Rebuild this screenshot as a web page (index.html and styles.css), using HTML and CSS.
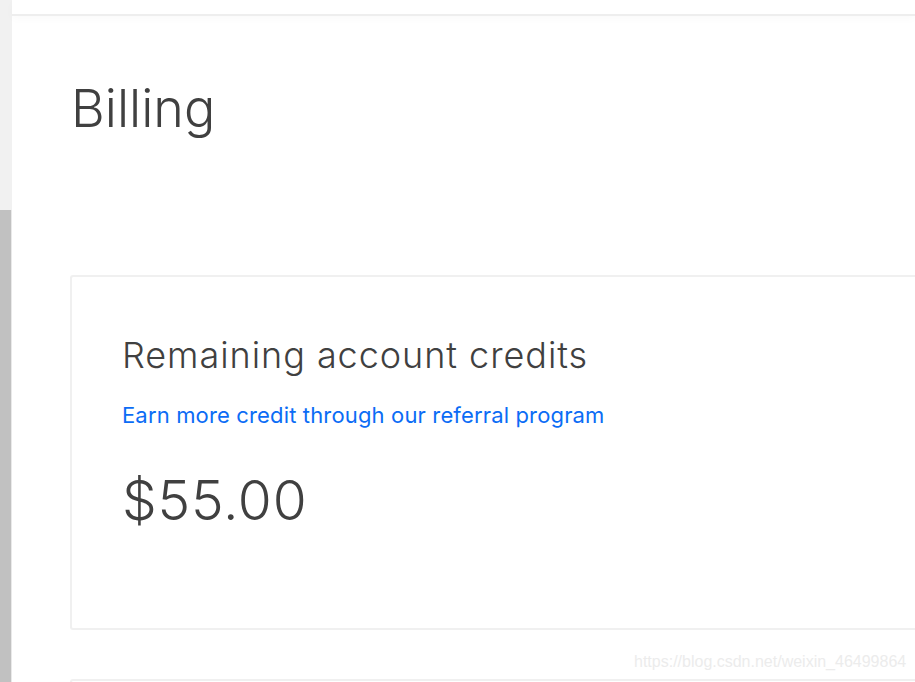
FILE: index.html
```html
<!DOCTYPE html>
<html>
<head>
<meta charset="utf-8">
<link rel="stylesheet" href="styles.css">
</head>
<body>
<div class="rail">
  <div class="rail-top"></div>
  <div class="rail-thumb"></div>
</div>
<div class="main">
  <div class="topbar"></div>
  <div class="content">
    <h1 class="title">Billing</h1>
    <section class="card">
      <h2 class="card-title">Remaining account credits</h2>
      <a class="card-link" href="#">Earn more credit through our referral program</a>
      <div class="amount">$55.00</div>
    </section>
    <section class="card card-next"></section>
  </div>
</div>
<div class="watermark">https://blog.csdn.net/weixin_46499864</div>
</body>
</html>
```
FILE: styles.css
```css
html, body {
  margin: 0;
  padding: 0;
  height: 100%;
  overflow: hidden;
  background: #fff;
}
body {
  display: flex;
  font-family: Inter, Lato, sans-serif;
  color: #404040;
}
.rail {
  width: 12px;
  flex: none;
  display: flex;
  flex-direction: column;
}
.rail-top {
  height: 210px;
  background: #f1f1f1;
}
.rail-thumb {
  flex: 1;
  background: #c1c1c1;
  border-right: 1px solid #e9e9e9;
}
.main {
  flex: 1;
  min-width: 0;
  display: flex;
  flex-direction: column;
}
.topbar {
  height: 14px;
  flex: none;
  border-bottom: 2px solid #eeeeee;
  box-shadow: 0 3px 8px rgba(0, 0, 0, 0.025);
}
.content {
  padding: 0 0 0 58px;
}
.title {
  margin: 61px 0 0 1px;
  font-size: 52px;
  font-weight: 300;
  line-height: 64px;
  color: #404040;
}
.card {
  margin-top: 134px;
  border: 2px solid #f0f0f0;
  border-right: none;
  border-radius: 3px 0 0 3px;
  height: 355px;
  box-sizing: border-box;
  padding: 56px 0 0 50px;
}
.card-title {
  margin: 0;
  font-size: 36px;
  font-weight: 350;
  line-height: 44px;
  letter-spacing: 0.95px;
  color: #404040;
}
.card-link {
  display: block;
  margin-top: 24px;
  font-size: 22px;
  line-height: 28px;
  letter-spacing: 0.15px;
  color: #0b6cf5;
  text-decoration: none;
}
.amount {
  margin-top: 39px;
  font-size: 55px;
  font-weight: 300;
  line-height: 64px;
  letter-spacing: 0.8px;
  color: #404040;
}
.card-next {
  margin-top: 49px;
  height: 3px;
  border-bottom: none;
  border-radius: 3px 0 0 0;
}
.watermark {
  position: absolute;
  left: 634px;
  top: 653px;
  font-family: "Liberation Sans", Arial, sans-serif;
  font-size: 16px;
  color: #ececec;
  white-space: nowrap;
}
```
